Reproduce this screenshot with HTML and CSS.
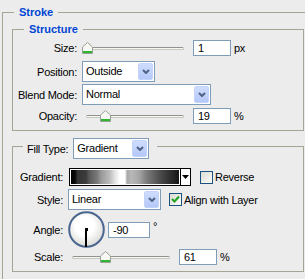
FILE: index.html
```html
<!DOCTYPE html>
<html>
<head>
<meta charset="utf-8">
<link rel="stylesheet" href="styles.css">
</head>
<body>
<div class="group outer">
  <div class="gh"><span class="gl"></span><span class="legend">Stroke</span><span class="gr"></span></div>
  <div class="gb outer-body">
    <div class="group">
      <div class="gh"><span class="gl"></span><span class="legend">Structure</span><span class="gr"></span></div>
      <div class="gb struct-body">
        <div class="row h16">
          <span class="lbl lbl-s">Size:</span>
          <div class="slider"><span class="track"></span>
            <svg class="thumb" style="left:0px" width="11" height="12" viewBox="0 0 11 12"><path d="M5.5 0.5 L10.5 5 V11.5 H0.5 V5 Z" fill="#f7f7f3" stroke="#97a097"/><rect x="1" y="9" width="9" height="2" fill="#2fb52f"/></svg>
          </div>
          <div class="input w38">1</div><span class="unit">px</span>
        </div>
        <div class="row h21 mt5">
          <span class="lbl lbl-s">Position:</span>
          <div class="select w-pos"><span class="val">Outside</span><span class="btn"><svg width="8" height="5" viewBox="0 0 8 5"><path d="M1 1 L4 4 L7 1" fill="none" stroke="#4d6185" stroke-width="2"/></svg></span></div>
        </div>
        <div class="row h21 mt2">
          <span class="lbl lbl-s">Blend Mode:</span>
          <div class="select w-blend"><span class="val">Normal</span><span class="btn"><svg width="8" height="5" viewBox="0 0 8 5"><path d="M1 1 L4 4 L7 1" fill="none" stroke="#4d6185" stroke-width="2"/></svg></span></div>
        </div>
        <div class="row h16 mt3">
          <span class="lbl lbl-s">Opacity:</span>
          <div class="slider"><span class="track"></span>
            <svg class="thumb" style="left:18px" width="11" height="12" viewBox="0 0 11 12"><path d="M5.5 0.5 L10.5 5 V11.5 H0.5 V5 Z" fill="#f7f7f3" stroke="#97a097"/><rect x="1" y="9" width="9" height="2" fill="#2fb52f"/></svg>
          </div>
          <div class="input w38">19</div><span class="unit">%</span>
        </div>
      </div>
    </div>

    <div class="group fill">
      <div class="gh gh-fill">
        <span class="gl gl-fill"></span>
        <span class="legend-ctl">
          <span class="ft-lbl">Fill Type:</span>
          <span class="select w-fill"><span class="val">Gradient</span><span class="btn"><svg width="8" height="5" viewBox="0 0 8 5"><path d="M1 1 L4 4 L7 1" fill="none" stroke="#4d6185" stroke-width="2"/></svg></span></span>
        </span>
        <span class="gr gr-fill"></span>
      </div>
      <div class="gb fill-body">
        <div class="row h18">
          <span class="lbl lbl-f">Gradient:</span>
          <div class="grad"><span class="grad-fill"></span><span class="grad-arrow"><svg width="7" height="4" viewBox="0 0 7 4"><path d="M0 0 H7 L3.5 4 Z" fill="#000"/></svg></span></div>
          <span class="cb cb-rev"></span><span class="cb-lbl">Reverse</span>
        </div>
        <div class="row h21 mt3">
          <span class="lbl lbl-f">Style:</span>
          <div class="select w-style"><span class="val">Linear</span><span class="btn"><svg width="8" height="5" viewBox="0 0 8 5"><path d="M1 1 L4 4 L7 1" fill="none" stroke="#4d6185" stroke-width="2"/></svg></span></div>
          <span class="cb cb-align"><svg width="11" height="11" viewBox="0 0 11 11"><path d="M2 5 L4.5 7.5 L9 2.5" fill="none" stroke="#21a121" stroke-width="2"/></svg></span><span class="cb-lbl">Align with Layer</span>
        </div>
        <div class="row h37 mt1">
          <span class="lbl lbl-f">Angle:</span>
          <svg class="dial" width="37" height="37" viewBox="0 0 37 37">
            <defs><radialGradient id="dg" cx="45%" cy="40%" r="60%"><stop offset="0.45" stop-color="#ffffff"/><stop offset="1" stop-color="#dadad6"/></radialGradient></defs>
            <circle cx="18.5" cy="18.5" r="17.3" fill="url(#dg)" stroke="#4a6690" stroke-width="2"/>
            <rect x="17" y="19" width="2" height="17" fill="#000"/>
            <rect x="17" y="17" width="3" height="3" fill="#000"/>
          </svg>
          <div class="input w42 ml3">-90</div><span class="deg">°</span>
        </div>
        <div class="row h16 mt1">
          <span class="lbl lbl-f">Scale:</span>
          <div class="slider"><span class="track"></span>
            <svg class="thumb" style="left:32px" width="11" height="12" viewBox="0 0 11 12"><path d="M5.5 0.5 L10.5 5 V11.5 H0.5 V5 Z" fill="#f7f7f3" stroke="#97a097"/><rect x="1" y="9" width="9" height="2" fill="#2fb52f"/></svg>
          </div>
          <div class="input w38">61</div><span class="unit">%</span>
        </div>
      </div>
    </div>
  </div>
</div>
</body>
</html>
```

FILE: styles.css
```css
html, body {
  margin: 0;
  padding: 0;
}
body {
  width: 305px;
  height: 279px;
  overflow: hidden;
  background: #ececec;
  font-family: "Liberation Sans", Arial, sans-serif;
  font-size: 11px;
  letter-spacing: -0.25px;
  color: #000;
}

.group { box-sizing: border-box; }
.outer {
  width: 312px;
  margin: 6px 0 0 2px;
}

.gh {
  display: flex;
  align-items: stretch;
}
.gl {
  width: 12px;
  flex: none;
  margin-top: 6px;
  border-top: 1px solid #a5a596;
  border-left: 1px solid #a5a596;
  box-sizing: border-box;
}
.gr {
  flex: 1;
  margin-top: 6px;
  border-top: 1px solid #a5a596;
  border-right: 1px solid #a5a596;
}
.legend {
  font-weight: bold;
  color: #0046d5;
  line-height: 13px;
  padding: 0 5px;
  letter-spacing: 0;
}
.gb {
  border: 1px solid #a5a596;
  border-top: none;
}

.outer-body {
  padding: 4px 9px 7px 9px;
  border-bottom: none;
}

.struct-body {
  padding: 4px 0 6px 0;
}

.row {
  display: flex;
  align-items: center;
}
.h16 { height: 16px; }
.h18 { height: 18px; }
.h21 { height: 21px; }
.h37 { height: 37px; }
.mt1 { margin-top: 1px; }
.mt2 { margin-top: 2px; }
.mt3 { margin-top: 3px; }
.mt5 { margin-top: 5px; }

.lbl {
  flex: none;
  text-align: right;
  margin-right: 5px;
  white-space: nowrap;
}
.lbl-s { width: 64px; }
.lbl-f { width: 50px; }

.slider {
  position: relative;
  width: 104px;
  height: 16px;
  flex: none;
}
.track {
  position: absolute;
  left: 4px;
  right: 2px;
  top: 7px;
  height: 3px;
  box-sizing: border-box;
  background: #f7f6ef;
  border: 1px solid #c8c8c0;
  border-top-color: #929292;
  border-radius: 2px;
}
.thumb {
  position: absolute;
  top: 2px;
  display: block;
}

.input {
  flex: none;
  box-sizing: border-box;
  height: 16px;
  line-height: 14px;
  border: 1px solid #7f9db9;
  background: #fff;
  padding-left: 4px;
  margin-left: 7px;
}
.w38 { width: 38px; }
.w42 { width: 42px; }
.ml3.input { margin-left: 3px; }
.unit { margin-left: 3px; }

.select {
  flex: none;
  display: flex;
  align-items: stretch;
  box-sizing: border-box;
  height: 21px;
  border: 1px solid #7f9db9;
  background: #fff;
  padding: 1px;
}
.val {
  flex: 1;
  padding-left: 2px;
  line-height: 17px;
  white-space: nowrap;
}
.btn {
  width: 15px;
  box-sizing: border-box;
  border: 1px solid #c3d3fb;
  border-radius: 2px;
  background: linear-gradient(#cedcfd, #b4c8f8);
  display: flex;
  align-items: center;
  justify-content: center;
}
.btn svg { display: block; }
.w-pos { width: 73px; }
.w-blend { width: 129px; }
.w-fill { width: 76px; }
.w-style { width: 93px; }

.fill { margin-top: 7px; }
.gh-fill { height: 21px; }
.gl-fill { width: 11px; margin-top: 8px; }
.gr-fill { margin-top: 8px; margin-left: 8px; }
.legend-ctl {
  display: flex;
  align-items: center;
  padding-left: 4px;
}
.ft-lbl { margin-right: 5px; white-space: nowrap; }

.fill-body {
  padding: 9px 0 6px 0;
}

.grad {
  flex: none;
  display: flex;
  width: 122px;
  height: 18px;
  margin-left: 1px;
  box-sizing: border-box;
  border: 1px solid #000;
  background: #fff;
}
.grad-fill {
  flex: 1;
  border: 1px solid #fff;
  background: linear-gradient(to right,
    #000 0%, #0c0c0c 4%, #333 6%, #3c3c3c 14%, #5a5a5a 17%, #787878 24%,
    #9a9a9a 28%, #bdbdbd 36%, #dedede 40%, #fff 45%, #fff 50%,
    #a8a8a8 52%, #b8b8b8 56%, #a6a6a6 63%, #7c7c7c 70%, #555 80%,
    #3a3a3a 88%, #151515 100%);
}
.grad-arrow {
  width: 9px;
  border-left: 1px solid #000;
  display: flex;
  align-items: center;
  justify-content: center;
}
.grad-arrow svg { display: block; }

.cb {
  flex: none;
  width: 13px;
  height: 13px;
  box-sizing: border-box;
  border: 1px solid #1c5180;
  background: linear-gradient(135deg, #dcdcd5, #fbfbf9);
  display: flex;
  align-items: center;
  justify-content: center;
}
.cb svg { display: block; }
.cb-rev { margin-left: 9px; }
.cb-align { margin-left: 8px; }
.cb-lbl { margin-left: 2px; white-space: nowrap; }

.dial {
  flex: none;
  display: block;
}
.deg {
  align-self: flex-start;
  margin-top: 9px;
  margin-left: 3px;
  line-height: 13px;
}
```
